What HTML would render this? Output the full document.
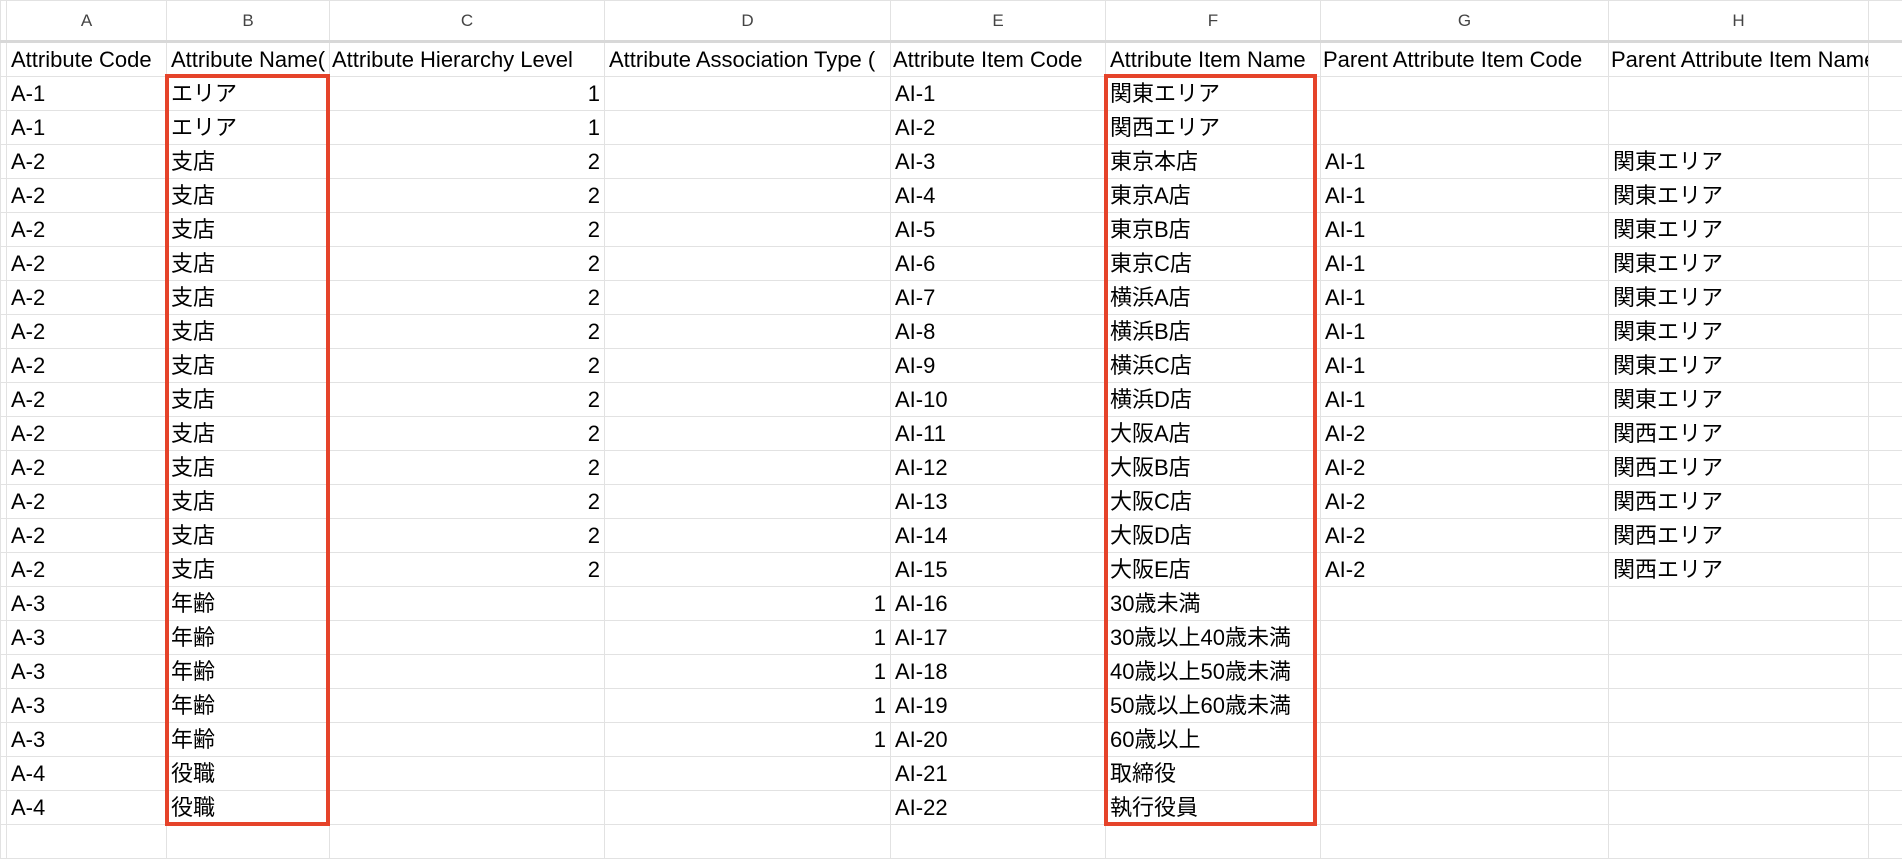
<!DOCTYPE html>
<html><head><meta charset="utf-8"><style>
body{margin:0;width:1902px;height:828px;overflow:hidden;background:#fff;font-family:"Liberation Sans","Noto Sans CJK JP",sans-serif;}
table{border-collapse:collapse;table-layout:fixed;position:absolute;left:0;top:0;width:1902px;}
td{border:1px solid #e2e2e2;height:33px;padding:0 4px;font-size:22px;color:#000;white-space:nowrap;overflow:hidden;line-height:33px;}
tr.l td{height:39px;font-size:17px;color:#444;text-align:center;border-bottom:3px solid #d8d8d8;}
tr.h td{height:33px;}
td.r{text-align:right;}
td.x{padding:0;}
.box{position:absolute;border:4px solid #e5432a;box-sizing:border-box;}
</style></head><body>
<table>
<colgroup><col style="width:6px"><col style="width:160px"><col style="width:163px"><col style="width:275px"><col style="width:286px"><col style="width:215px"><col style="width:215px"><col style="width:288px"><col style="width:260px"><col style="width:34px"></colgroup>
<tr class="l"><td class="x"></td><td>A</td><td>B</td><td>C</td><td>D</td><td>E</td><td>F</td><td>G</td><td>H</td><td></td></tr>
<tr class="h"><td class="x"></td><td>Attribute Code</td><td style="padding-right:0">Attribute Name(</td><td style="padding-left:2px">Attribute Hierarchy Level</td><td>Attribute Association Type (</td><td style="padding-left:2px">Attribute Item Code</td><td>Attribute Item Name</td><td style="padding-left:2px">Parent Attribute Item Code</td><td style="padding-left:2px">Parent Attribute Item Name(</td><td></td></tr>
<tr><td class="x"></td><td>A-1</td><td>エリア</td><td class="r">1</td><td></td><td>AI-1</td><td>関東エリア</td><td></td><td></td><td></td></tr>
<tr><td class="x"></td><td>A-1</td><td>エリア</td><td class="r">1</td><td></td><td>AI-2</td><td>関西エリア</td><td></td><td></td><td></td></tr>
<tr><td class="x"></td><td>A-2</td><td>支店</td><td class="r">2</td><td></td><td>AI-3</td><td>東京本店</td><td>AI-1</td><td>関東エリア</td><td></td></tr>
<tr><td class="x"></td><td>A-2</td><td>支店</td><td class="r">2</td><td></td><td>AI-4</td><td>東京A店</td><td>AI-1</td><td>関東エリア</td><td></td></tr>
<tr><td class="x"></td><td>A-2</td><td>支店</td><td class="r">2</td><td></td><td>AI-5</td><td>東京B店</td><td>AI-1</td><td>関東エリア</td><td></td></tr>
<tr><td class="x"></td><td>A-2</td><td>支店</td><td class="r">2</td><td></td><td>AI-6</td><td>東京C店</td><td>AI-1</td><td>関東エリア</td><td></td></tr>
<tr><td class="x"></td><td>A-2</td><td>支店</td><td class="r">2</td><td></td><td>AI-7</td><td>横浜A店</td><td>AI-1</td><td>関東エリア</td><td></td></tr>
<tr><td class="x"></td><td>A-2</td><td>支店</td><td class="r">2</td><td></td><td>AI-8</td><td>横浜B店</td><td>AI-1</td><td>関東エリア</td><td></td></tr>
<tr><td class="x"></td><td>A-2</td><td>支店</td><td class="r">2</td><td></td><td>AI-9</td><td>横浜C店</td><td>AI-1</td><td>関東エリア</td><td></td></tr>
<tr><td class="x"></td><td>A-2</td><td>支店</td><td class="r">2</td><td></td><td>AI-10</td><td>横浜D店</td><td>AI-1</td><td>関東エリア</td><td></td></tr>
<tr><td class="x"></td><td>A-2</td><td>支店</td><td class="r">2</td><td></td><td>AI-11</td><td>大阪A店</td><td>AI-2</td><td>関西エリア</td><td></td></tr>
<tr><td class="x"></td><td>A-2</td><td>支店</td><td class="r">2</td><td></td><td>AI-12</td><td>大阪B店</td><td>AI-2</td><td>関西エリア</td><td></td></tr>
<tr><td class="x"></td><td>A-2</td><td>支店</td><td class="r">2</td><td></td><td>AI-13</td><td>大阪C店</td><td>AI-2</td><td>関西エリア</td><td></td></tr>
<tr><td class="x"></td><td>A-2</td><td>支店</td><td class="r">2</td><td></td><td>AI-14</td><td>大阪D店</td><td>AI-2</td><td>関西エリア</td><td></td></tr>
<tr><td class="x"></td><td>A-2</td><td>支店</td><td class="r">2</td><td></td><td>AI-15</td><td>大阪E店</td><td>AI-2</td><td>関西エリア</td><td></td></tr>
<tr><td class="x"></td><td>A-3</td><td>年齢</td><td></td><td class="r">1</td><td>AI-16</td><td>30歳未満</td><td></td><td></td><td></td></tr>
<tr><td class="x"></td><td>A-3</td><td>年齢</td><td></td><td class="r">1</td><td>AI-17</td><td>30歳以上40歳未満</td><td></td><td></td><td></td></tr>
<tr><td class="x"></td><td>A-3</td><td>年齢</td><td></td><td class="r">1</td><td>AI-18</td><td>40歳以上50歳未満</td><td></td><td></td><td></td></tr>
<tr><td class="x"></td><td>A-3</td><td>年齢</td><td></td><td class="r">1</td><td>AI-19</td><td>50歳以上60歳未満</td><td></td><td></td><td></td></tr>
<tr><td class="x"></td><td>A-3</td><td>年齢</td><td></td><td class="r">1</td><td>AI-20</td><td>60歳以上</td><td></td><td></td><td></td></tr>
<tr><td class="x"></td><td>A-4</td><td>役職</td><td></td><td></td><td>AI-21</td><td>取締役</td><td></td><td></td><td></td></tr>
<tr><td class="x"></td><td>A-4</td><td>役職</td><td></td><td></td><td>AI-22</td><td>執行役員</td><td></td><td></td><td></td></tr>
<tr><td class="x"></td><td></td><td></td><td></td><td></td><td></td><td></td><td></td><td></td><td></td></tr>
</table>
<div class="box" style="left:165px;top:74px;width:165px;height:752px"></div>
<div class="box" style="left:1104px;top:74px;width:213px;height:752px"></div>
</body></html>
